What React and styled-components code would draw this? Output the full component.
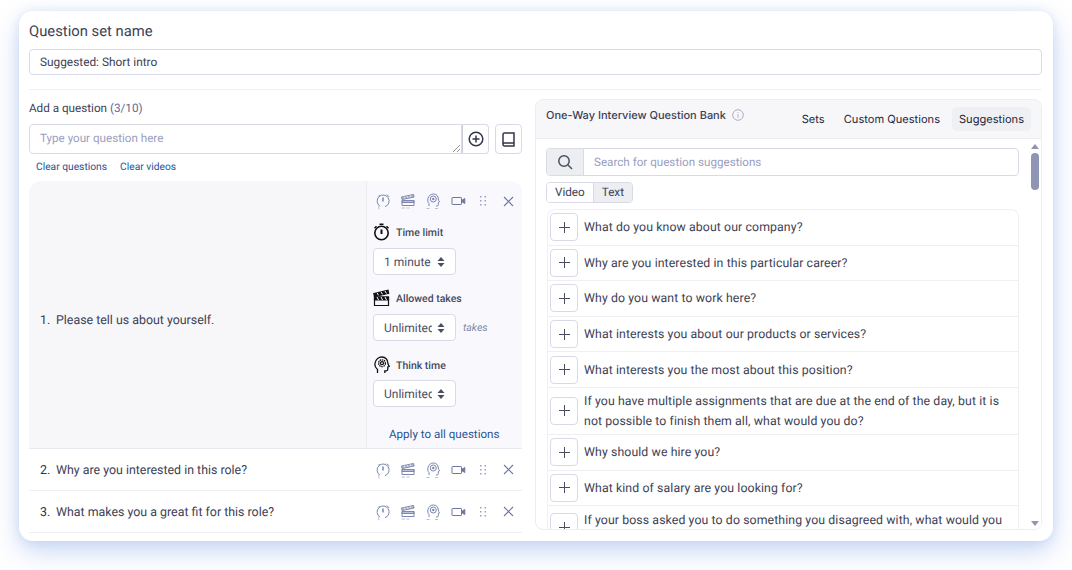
import React from 'react';
import styled, { createGlobalStyle } from 'styled-components';

const GlobalStyle = createGlobalStyle`
  html, body {
    margin: 0;
    padding: 0;
    background: #fff;
    overflow: hidden;
  }
  * { box-sizing: border-box; }
`;

const Page = styled.div`
  width: 1072px;
  height: 570px;
  padding: 11px 19px 29px;
  font-family: Roboto, sans-serif;
  color: #3d4155;
  text-rendering: geometricPrecision;
`;

const Card = styled.div`
  height: 530px;
  background: #fff;
  border-radius: 14px;
  box-shadow: 0 10px 26px rgba(100, 140, 225, 0.36), 0 0 10px rgba(100, 140, 225, 0.14);
  padding: 10px 11px 0 10px;
  overflow: hidden;
`;

const SetTitle = styled.div`
  font-size: 14.8px;
  line-height: 20px;
`;

const NameInput = styled.div`
  margin-top: 8px;
  height: 26px;
  border: 1px solid #d9d9e8;
  border-radius: 4px;
  padding: 0 10px;
  font-size: 11.85px;
  line-height: 24px;
`;

const Divider = styled.div`
  height: 1px;
  margin-top: 14px;
  background: #f0f0f5;
`;

const Columns = styled.div`
  display: grid;
  grid-template-columns: 493px 507px;
  justify-content: space-between;
  margin-top: 9px;
`;

const AddLabel = styled.div`
  margin-top: 1px;
  font-size: 11.7px;
  line-height: 16px;
  span { color: #5c6a9c; }
`;

const AddRow = styled.div`
  display: flex;
  margin-top: 8px;
  height: 30px;
`;

const Textarea = styled.div`
  position: relative;
  flex: 1;
  border: 1px solid #d9d9e8;
  border-radius: 4px 0 0 4px;
  padding: 0 10px;
  font-size: 11.65px;
  line-height: 26px;
  color: #9aa0c0;
  svg {
    position: absolute;
    right: 0;
    bottom: 0;
  }
`;

const AddBtn = styled.div`
  width: 27px;
  display: flex;
  align-items: center;
  justify-content: center;
  border: 1px solid #d9d9e8;
  border-left: 1px solid #c9c9d8;
  border-radius: 0 4px 4px 0;
`;

const BookBtn = styled.div`
  width: 27px;
  margin-left: 6px;
  display: flex;
  align-items: center;
  justify-content: center;
  border: 1px solid #d9d9e8;
  border-radius: 4px;
`;

const Links = styled.div`
  display: flex;
  gap: 13px;
  padding-left: 7px;
  margin-top: 6px;
  font-size: 10.25px;
  line-height: 13px;
  color: #2a5494;
`;

const OpenRow = styled.div`
  display: grid;
  grid-template-columns: 337px 156px;
  margin-top: 8px;
  height: 268px;
  background: #f7f7fa;
  border-radius: 12px 12px 0 0;
  border-bottom: 1px solid #e9e9f0;
`;

const OpenText = styled.div`
  display: flex;
  align-items: center;
  padding: 12px 0 0 11px;
  font-size: 12.4px;
`;

const RowNumber = styled.span`
  display: inline-block;
  width: 16px;
  color: #2f3346;
`;

const SettingsPane = styled.div`
  background: #f9f9fd;
  border-left: 1px solid #ececf2;
  border-radius: 0 12px 0 0;
  padding: 11px 0 0 6px;
`;

const IconRow = styled.div`
  display: flex;
  align-items: center;
  gap: 9px;
  height: 18px;
  margin-left: ${(p) => (p.$inset ? '2px' : '0')};
`;

const IconSlot = styled.span`
  width: 16px;
  height: 18px;
  display: flex;
  align-items: center;
  justify-content: center;
  flex: none;
`;

const SettingLabel = styled.div`
  display: flex;
  align-items: center;
  gap: 6px;
  height: 20px;
  margin-top: ${(p) => p.$top}px;
  font-size: 10.5px;
  font-weight: 500;
  color: #454a5e;
`;

const SelectRow = styled.div`
  display: flex;
  align-items: center;
  margin-top: ${(p) => p.$top}px;
`;

const SelectBox = styled.div`
  width: 83px;
  height: 27px;
  display: flex;
  align-items: center;
  padding-left: 10px;
  gap: 5px;
  background: #fff;
  border: 1px solid #d9d9e8;
  border-radius: 4px;
  font-size: 12px;
  color: #4a4e62;
`;

const SelectValue = styled.span`
  width: 48px;
  overflow: hidden;
  white-space: nowrap;
`;

const Takes = styled.span`
  margin-left: 7px;
  font-size: 10.5px;
  font-style: italic;
  color: #8088ac;
`;

const ApplyAll = styled.div`
  margin-top: 20px;
  padding-left: 16px;
  font-size: 11.6px;
  color: #2a5494;
`;

const QRow = styled.div`
  display: flex;
  align-items: center;
  justify-content: space-between;
  height: 42px;
  padding: 0 6px 0 11px;
  border-bottom: 1px solid #eeeef3;
  font-size: 12.4px;
`;

const QText = styled.span`
  padding-top: 2px;
`;

const Bank = styled.div`
  position: relative;
  height: 431px;
  border: 1px solid #ececf2;
  border-radius: 8px;
  overflow: hidden;
`;

const BankHeader = styled.div`
  display: flex;
  align-items: center;
  height: 39px;
  padding: 0 10px 0 10px;
  background: #f7f7fa;
  border-bottom: 1px solid #ececf2;
`;

const BankTitle = styled.div`
  font-family: Inter, sans-serif;
  font-size: 11px;
  font-weight: 500;
  color: #3d4155;
  display: flex;
  align-items: center;
  gap: 6px;
  margin-bottom: 8px;
`;

const Tabs = styled.div`
  margin-left: auto;
  display: flex;
  align-items: center;
  gap: 5px;
`;

const Tab = styled.div`
  font-family: Inter, sans-serif;
  font-size: 11.1px;
  padding: 0 7px;
  height: 24px;
  line-height: 24px;
  border-radius: 5px;
  color: #23263a;
  background: ${(p) => (p.$active ? '#eff0f4' : 'transparent')};
`;

const BankBody = styled.div`
  padding: 9px 0 0 10px;
  height: 391px;
  overflow: hidden;
`;

const SearchBar = styled.div`
  display: flex;
  width: 473px;
  height: 28px;
  border: 1px solid #d9d9e8;
  border-radius: 4px;
  overflow: hidden;
`;

const SearchIcon = styled.div`
  width: 37px;
  display: flex;
  align-items: center;
  justify-content: center;
  background: #eceef2;
  border-right: 1px solid #d9d9e8;
`;

const SearchText = styled.div`
  padding-left: 10px;
  font-size: 11.65px;
  line-height: 26px;
  color: #9aa0c0;
`;

const Toggle = styled.div`
  display: inline-flex;
  margin-top: 6px;
  height: 21px;
  border: 1px solid #d9d9e8;
  border-radius: 4px;
  overflow: hidden;
  vertical-align: top;
`;

const ToggleItem = styled.div`
  font-size: 11.7px;
  line-height: 19px;
  padding: 0 8px;
  color: #3d4155;
  background: ${(p) => (p.$active ? '#eceef2' : '#fff')};
  border-left: ${(p) => (p.$active ? '1px solid #d9d9e8' : 'none')};
`;

const BankList = styled.div`
  width: 472px;
  margin: 6px 0 0 1px;
  border: 1px solid #f0f0f4;
  border-bottom: 0;
  border-radius: 8px 8px 0 0;
`;

const BankRow = styled.div`
  display: flex;
  align-items: ${(p) => (p.$cut ? 'flex-start' : 'center')};
  gap: 6px;
  min-height: 35.6px;
  padding: ${(p) => (p.$cut ? '3px 10px 0 2px' : '0 10px 0 2px')};
  border-bottom: 1px solid #eeeef3;
  &:last-child { border-bottom: 0; }
`;

const PlusBtn = styled.div`
  flex: none;
  width: 28px;
  height: 28px;
  display: flex;
  align-items: center;
  justify-content: center;
  border: 1px solid #d9d9e8;
  border-radius: 4px;
  background: #fff;
  margin-top: ${(p) => (p.$cut ? '4px' : '0')};
`;

const BankText = styled.div`
  font-size: 12.3px;
  letter-spacing: 0.1px;
  line-height: 20px;
  padding-top: ${(p) => (p.$two ? '4px' : '2px')};
  padding-bottom: ${(p) => (p.$two ? '2px' : '0')};
  color: #3d4155;
`;

const ScrollTrack = styled.div`
  position: absolute;
  top: 39px;
  right: 0;
  bottom: 0;
  width: 12px;
  background: #fff;
`;

const ArrowUp = styled.div`
  position: absolute;
  top: 5px;
  left: 2px;
  border: 4px solid transparent;
  border-top: 0;
  border-bottom: 5px solid #8e95b5;
`;

const ArrowDown = styled.div`
  position: absolute;
  bottom: 3px;
  left: 2px;
  border: 4px solid transparent;
  border-bottom: 0;
  border-top: 5px solid #8e95b5;
`;

const Thumb = styled.div`
  position: absolute;
  top: 14px;
  left: 2px;
  width: 8px;
  height: 37px;
  border-radius: 4px;
  background: #8e95b5;
`;

// small row icons are pale with a dashed bit under them, the big ones are solid black
const TimerIcon = () => (
  <svg width="16" height="18" viewBox="0 0 16 18" fill="none" stroke="#7c86ae" strokeWidth="1">
    <path d="M4.800 14A6 6 0 1 1 10 14.700" />
    <path d="M8 5.500v4" strokeWidth="1.500" />
    <path d="M11.800 2.600l2.200 2.200M3.400 4.300l1.300-1.300" />
    <path d="M3.800 13.500v3.800" stroke="#b9bed6" />
  </svg>
);

const ClapIcon = () => (
  <svg width="16" height="18" viewBox="0 0 16 18" fill="none" stroke="#7c86ae" strokeWidth="1">
    <path d="M2 8.500h12v5H2z" />
    <path d="M2 8.500h12v2H2z" fill="#7c86ae" fillOpacity=".5" />
    <path d="M1.500 5l12-2.500.6 2.500-12 2.500z" fill="#7c86ae" fillOpacity=".55" />
    <path d="M4 4.400l1 2M7 3.800l1 2M10 3.200l1 2" stroke="#f9f9fd" strokeWidth=".7" />
    <path d="M1.500 16h3.500M6.500 16h3" stroke="#b9bed6" />
  </svg>
);

const HeadIcon = () => (
  <svg width="16" height="18" viewBox="0 0 16 18" fill="none" stroke="#7c86ae" strokeWidth="1">
    <path d="M4 14v-2.500C2.800 10.300 2.500 8.500 3 6.500 3.700 3.500 6 2 8.500 2c3 0 4.800 2.200 4.800 5 0 1 .7 2.200 1.200 3l-1.200.6v2.200c0 .8-.6 1.200-1.300 1.200H11" />
    <circle cx="8.300" cy="7" r="3" />
    <circle cx="8.300" cy="7" r="1.200" fill="#7c86ae" stroke="none" />
    <path d="M1.500 16.500h3M10 16.500h3" stroke="#b9bed6" />
  </svg>
);

const BigTimer = () => (
  <svg width="17" height="18" viewBox="0 0 17 18" fill="none" stroke="#111" strokeWidth="1.600">
    <circle cx="8.500" cy="10" r="6.700" />
    <path d="M8.500 6.500v4.500" strokeWidth="2" />
    <path d="M6.500 1.200h4M13.500 3.300l2 1.900M3.500 3.300l-2 1.900" strokeWidth="1.500" />
  </svg>
);

const BigClap = () => (
  <svg width="17" height="18" viewBox="0 0 17 18" fill="none" stroke="#111" strokeWidth="1.200">
    <path d="M1.500 8h14v8.500h-14z" />
    <path d="M1.500 8h14v3h-14z" fill="#111" />
    <path d="M.8 4.500L15 1.200l.7 3L1.500 7.500z" fill="#111" />
    <path d="M4 3.800l1.500 2.500M8 2.900l1.500 2.500M12 2l1.500 2.500" stroke="#f9f9fd" strokeWidth="1" />
    <path d="M4 8l1.500 3M8 8l1.500 3M12 8l1.500 3" stroke="#f9f9fd" strokeWidth="1" />
  </svg>
);

const BigHead = () => (
  <svg width="17" height="18" viewBox="0 0 17 18" fill="none" stroke="#111" strokeWidth="1.300">
    <path d="M4.500 17v-3.500C2.500 12 1.500 9.800 2 7.200 2.600 3.600 5.500 1 9 1c3.500 0 5.800 2.600 5.800 5.800 0 1.200.8 2.500 1.500 3.500l-1.500.7v2.300c0 1-.7 1.500-1.600 1.500h-1.400V17" />
    <circle cx="9" cy="7.200" r="3.400" strokeDasharray="1.500 .7" />
    <circle cx="9" cy="7.200" r="1.500" />
  </svg>
);

const VideoIcon = () => (
  <svg width="15" height="10" viewBox="0 0 15 10" fill="none" stroke="#6d77a3" strokeWidth="1">
    <rect x="1" y="1.500" width="9.500" height="7" rx=".6" />
    <path d="M11 4.200l2.800-1.700v5L11 5.800z" fill="#6d77a3" />
  </svg>
);

const DragIcon = () => (
  <svg width="8" height="10" viewBox="0 0 8 10" fill="#9aa0c0">
    {[1, 5, 9].map((y) => (
      <React.Fragment key={y}>
        <rect x="1" y={y - 1} width="1.500" height="1.500" />
        <rect x="5.500" y={y - 1} width="1.500" height="1.500" />
      </React.Fragment>
    ))}
  </svg>
);

const CloseIcon = () => (
  <svg width="11" height="11" viewBox="0 0 11 11" stroke="#6d77a3" strokeWidth="1.100" fill="none">
    <path d="M1 1l9 9M10 1l-9 9" />
  </svg>
);

const SortArrows = () => (
  <svg width="8" height="10" viewBox="0 0 8 10" fill="#4a4e62">
    <path d="M4 0l3.500 4h-7zM4 10L.5 6h7z" />
  </svg>
);

const RowIcons = ({ inset }) => (
  <IconRow $inset={inset}>
    <IconSlot><TimerIcon /></IconSlot>
    <IconSlot><ClapIcon /></IconSlot>
    <IconSlot><HeadIcon /></IconSlot>
    <IconSlot><VideoIcon /></IconSlot>
    <IconSlot><DragIcon /></IconSlot>
    <IconSlot><CloseIcon /></IconSlot>
  </IconRow>
);

const Plus = () => (
  <svg width="11" height="11" viewBox="0 0 11 11" stroke="#4a4e62" strokeWidth="1">
    <path d="M5.500 0v11M0 5.500h11" />
  </svg>
);

const bankQuestions = [
  'What do you know about our company?',
  'Why are you interested in this particular career?',
  'Why do you want to work here?',
  'What interests you about our products or services?',
  'What interests you the most about this position?',
  'If you have multiple assignments that are due at the end of the day, but it is not possible to finish them all, what would you do?',
  'Why should we hire you?',
  'What kind of salary are you looking for?',
];

export default function App() {
  return (
    <Page>
      <GlobalStyle />
      <Card>
        <SetTitle>Question set name</SetTitle>
        <NameInput>Suggested: Short intro</NameInput>
        <Divider />
        <Columns>
          <div>
            <AddLabel>Add a question <span>(3/10)</span></AddLabel>
            <AddRow>
              <Textarea>
                Type your question here
                <svg width="9" height="9" viewBox="0 0 9 9" stroke="#777" strokeWidth="0.8">
                  <path d="M1 8l7-7M5 8l3-3" />
                </svg>
              </Textarea>
              <AddBtn>
                <svg width="16" height="16" viewBox="0 0 16 16" fill="none" stroke="#33364a" strokeWidth="1.500">
                  <circle cx="8" cy="8" r="6.800" />
                  <path d="M8 4.500v7M4.500 8h7" />
                </svg>
              </AddBtn>
              <BookBtn>
                <svg width="13" height="15" viewBox="0 0 13 15" fill="none" stroke="#33364a" strokeWidth="1.500">
                  <path d="M1 12V2.500A1.500 1.500 0 0 1 2.500 1H12v10H2.500A1.500 1.500 0 0 0 1 12.500 1.500 1.500 0 0 0 2.500 14H12v-3" />
                </svg>
              </BookBtn>
            </AddRow>
            <Links>
              <span>Clear questions</span>
              <span>Clear videos</span>
            </Links>
            <OpenRow>
              <OpenText><span><RowNumber>1.</RowNumber>Please tell us about yourself.</span></OpenText>
              <SettingsPane>
                <RowIcons inset />
                <SettingLabel $top={12}>
                  <BigTimer />
                  Time limit
                </SettingLabel>
                <SelectRow $top={6}>
                  <SelectBox>
                    <SelectValue>1 minute</SelectValue>
                    <SortArrows />
                  </SelectBox>
                </SelectRow>
                <SettingLabel $top={13}>
                  <BigClap />
                  Allowed takes
                </SettingLabel>
                <SelectRow $top={6}>
                  <SelectBox>
                    <SelectValue>Unlimited</SelectValue>
                    <SortArrows />
                  </SelectBox>
                  <Takes>takes</Takes>
                </SelectRow>
                <SettingLabel $top={14}>
                  <BigHead />
                  Think time
                </SettingLabel>
                <SelectRow $top={5}>
                  <SelectBox>
                    <SelectValue>Unlimited</SelectValue>
                    <SortArrows />
                  </SelectBox>
                </SelectRow>
                <ApplyAll>Apply to all questions</ApplyAll>
              </SettingsPane>
            </OpenRow>
            <QRow>
              <QText><RowNumber>2.</RowNumber>Why are you interested in this role?</QText>
              <RowIcons />
            </QRow>
            <QRow>
              <QText><RowNumber>3.</RowNumber>What makes you a great fit for this role?</QText>
              <RowIcons />
            </QRow>
          </div>
          <Bank>
            <BankHeader>
              <BankTitle>
                One-Way Interview Question Bank
                <svg width="12" height="12" viewBox="0 0 12 12" fill="none" stroke="#a9aec8" strokeWidth="1">
                  <circle cx="6" cy="6" r="5.300" />
                  <path d="M6 5.200v3.500M6 3.200v1" />
                </svg>
              </BankTitle>
              <Tabs>
                <Tab>Sets</Tab>
                <Tab>Custom Questions</Tab>
                <Tab $active>Suggestions</Tab>
              </Tabs>
            </BankHeader>
            <BankBody>
              <SearchBar>
                <SearchIcon>
                  <svg width="16" height="16" viewBox="0 0 16 16" fill="none" stroke="#4a4e62" strokeWidth="1.500">
                    <circle cx="7" cy="7" r="5.200" />
                    <path d="M11 11l4 4" />
                  </svg>
                </SearchIcon>
                <SearchText>Search for question suggestions</SearchText>
              </SearchBar>
              <Toggle>
                <ToggleItem>Video</ToggleItem>
                <ToggleItem $active>Text</ToggleItem>
              </Toggle>
              <BankList>
                {bankQuestions.map((q) => (
                  <BankRow key={q}>
                    <PlusBtn><Plus /></PlusBtn>
                    <BankText $two={q.length > 100}>{q}</BankText>
                  </BankRow>
                ))}
                <BankRow $cut>
                  <PlusBtn $cut><Plus /></PlusBtn>
                  <BankText>If your boss asked you to do something you disagreed with, what would you do?</BankText>
                </BankRow>
              </BankList>
            </BankBody>
            <ScrollTrack>
              <ArrowUp />
              <Thumb />
              <ArrowDown />
            </ScrollTrack>
          </Bank>
        </Columns>
      </Card>
    </Page>
  );
}
